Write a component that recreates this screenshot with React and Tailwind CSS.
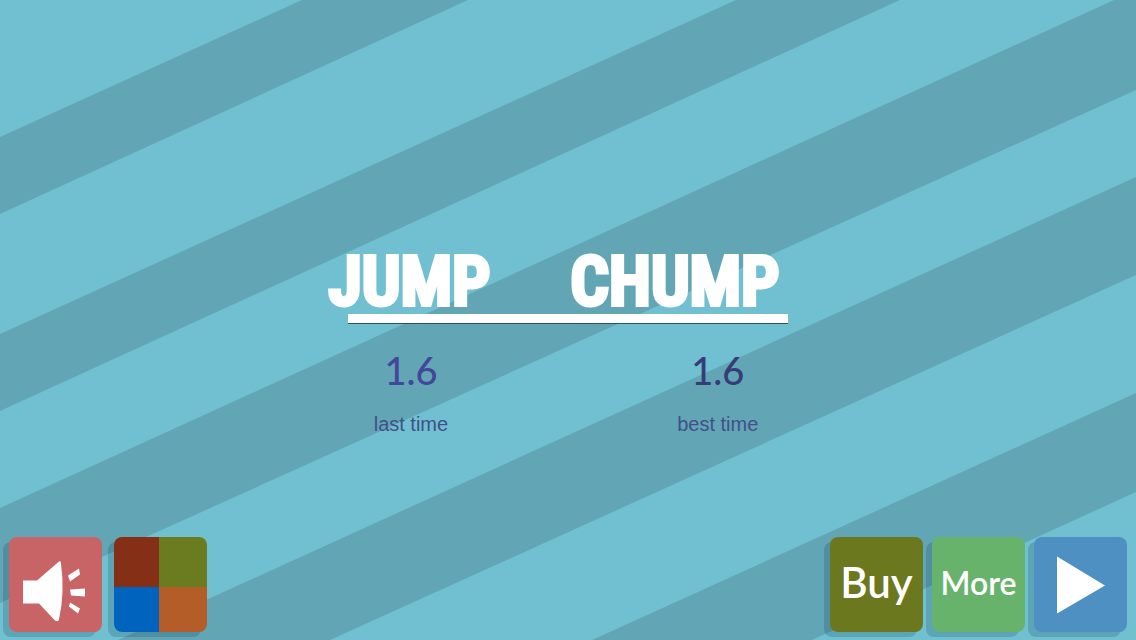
import { clsx } from 'clsx';

const stripes = [
  '0,137 302,0 468,0 0,214',
  '0,334 736,0 900,0 0,411',
  '0,508 1114,0 1136,0 1136,90 0,603',
  '1136,177 1136,275 330,640 118,640',
  '1136,393 1136,492 812,640 592,640',
];

const Tile = ({ label, className, children }) => (
  <button
    type="button"
    aria-label={label}
    className={clsx(
      'flex h-[95px] w-[93px] shrink-0 items-center justify-center overflow-hidden rounded-lg text-white shadow-[-6px_5px_0_#00324830]',
      className
    )}
  >
    {children}
  </button>
);

const Score = ({ value, label, className }) => (
  <div className={clsx('flex flex-col items-center', className)}>
    <span className="font-[Lato] text-[38px] leading-9 font-medium">{value}</span>
    <span className="mt-6 text-[20px] leading-6 text-[#41508a]">{label}</span>
  </div>
);

const App = () => (
  <main className="relative isolate flex min-h-screen flex-col overflow-hidden bg-[#70c0d1] font-['Liberation_Sans',sans-serif]">
    {/* Diagonal stripes */}
    <svg
      aria-hidden="true"
      className="absolute inset-0 -z-10 h-full w-full"
      viewBox="0 0 1136 640"
      preserveAspectRatio="xMidYMid slice"
    >
      {stripes.map((points) => (
        <polygon key={points} points={points} fill="#62a6b6" />
      ))}
    </svg>

    {/* Title and times */}
    <section className="flex flex-1 flex-col items-center pt-[250px]">
      <h1 className="flex gap-20 pr-7 font-['Roboto_Condensed',sans-serif] text-[68px] leading-[64px] font-semibold text-white [-webkit-text-stroke:4px_white]">
        <span>JUMP</span>
        <span>CHUMP</span>
      </h1>
      <div className="h-[10px] w-[440px] border-b border-[#28545f] bg-white" />
      <div className="flex gap-[229px] pt-7 pr-1">
        <Score value="1.6" label="last time" className="text-[#43479a]" />
        <Score value="1.6" label="best time" className="text-[#373c78]" />
      </div>
    </section>

    <footer className="flex justify-between px-[9px] pb-2">
      <div className="flex gap-3">
        <Tile label="Sound" className="bg-[#c86466]">
          <svg viewBox="0 0 93 94" className="h-full w-full" fill="#fff">
            <path d="M14 43h14L50 24q2-1 2 2 4 29-2 56-1 3-4 1L30 66H14z" />
            <path d="M59 38 70 31l1 6-10 7zM61 52l15-1v8l-14-1zM61 65l10 6-2 5-9-7z" />
          </svg>
        </Tile>
        <Tile label="Colours">
          <span className="grid h-full w-full grid-cols-[45px_1fr] grid-rows-[50px_1fr]">
            <span className="bg-[#853016]" />
            <span className="bg-[#6b7c20]" />
            <span className="bg-[#0063bd]" />
            <span className="bg-[#b55d28]" />
          </span>
        </Tile>
      </div>
      <div className="flex gap-[9px]">
        <Tile className="bg-[#6c781d] pb-1 font-[Lato] text-[42px] font-semibold">Buy</Tile>
        <Tile className="bg-[#68b36c] pb-1 font-[Lato] text-[32px] font-semibold">More</Tile>
        <Tile label="Play" className="bg-[#4f90c2]">
          <svg viewBox="0 0 93 94" className="h-full w-full" fill="#fff">
            <path d="M23 19v57l48-28z" />
          </svg>
        </Tile>
      </div>
    </footer>
  </main>
);

export default App;
